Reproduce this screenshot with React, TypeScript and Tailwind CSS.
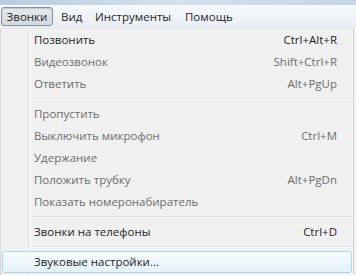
type Item = { label: string; shortcut?: string; disabled?: boolean; hover?: boolean } | "sep"

const items: Item[] = [
  { label: "Позвонить", shortcut: "Ctrl+Alt+R" },
  { label: "Видеозвонок", shortcut: "Shift+Ctrl+R", disabled: true },
  { label: "Ответить", shortcut: "Alt+PgUp", disabled: true },
  "sep",
  { label: "Пропустить", disabled: true },
  { label: "Выключить микрофон", shortcut: "Ctrl+M", disabled: true },
  { label: "Удержание", disabled: true },
  { label: "Положить трубку", shortcut: "Alt+PgDn", disabled: true },
  { label: "Показать номеронабиратель", disabled: true },
  "sep",
  { label: "Звонки на телефоны", shortcut: "Ctrl+D" },
  "sep",
  { label: "Звуковые настройки...", hover: true },
]

export default function App() {
  return (
    <div
      className="w-[356px] h-[275px] overflow-hidden bg-[#f0f0f0] text-[11.5px] leading-none"
      style={{ fontFamily: '"Open Sans", "Noto Sans", sans-serif' }}
    >
      <div className="h-[5px] bg-gradient-to-r from-[#b9cde0] via-[#d5e1ec] to-[#c4d5e6]" />
      <div className="h-[24px] flex items-center bg-gradient-to-b from-[#f7f9fb] to-[#e9eef4] border-b border-[#dfe4ea] text-[#1e1e1e]">
        <div className="ml-[1px] w-[52px] h-[19px] flex items-center justify-center rounded-[3px] border border-[#8a8f96] bg-gradient-to-b from-[#e6e9ed] to-[#d4d9df] shadow-[inset_0_1px_1px_rgba(0,0,0,0.15)]">
          Звонки
        </div>
        <div className="ml-[8px] w-[34px]">Вид</div>
        <div className="w-[90px]">Инструменты</div>
        <div>Помощь</div>
      </div>
      <div className="relative w-[354px] h-[246px] border-l border-r border-[#d7d7d7] bg-[#f0f0f0] text-[#1e1e1e]">
        <div className="absolute left-[27px] top-0 bottom-0 w-[2px] border-l border-[#e2e3e3] shadow-[1px_0_0_#ffffff]" />
        {items.map((it, i) =>
          it === "sep" ? (
            <div key={i} className="h-[8px] flex items-center pl-[30px]">
              <div className="w-full h-[2px] border-t border-[#e0e0e0] border-b border-b-white" />
            </div>
          ) : (
            <div key={i} className="h-[22px] relative flex items-center">
              {it.hover && (
                <div className="absolute left-[1px] right-[1px] top-0 bottom-0 rounded-[3px] border border-[#a8d8ec] bg-gradient-to-b from-[#f5fafd] to-[#e5f1fb]" />
              )}
              <span className={`relative pl-[33px] flex-1 ${it.disabled ? "text-[#6d6d6d]" : "text-[#1e1e1e]"}`}>
                {it.label}
              </span>
              {it.shortcut && (
                <span className={`relative pr-[16px] ${it.disabled ? "text-[#6d6d6d]" : "text-[#1e1e1e]"}`}>
                  {it.shortcut}
                </span>
              )}
            </div>
          )
        )}
      </div>
    </div>
  )
}
